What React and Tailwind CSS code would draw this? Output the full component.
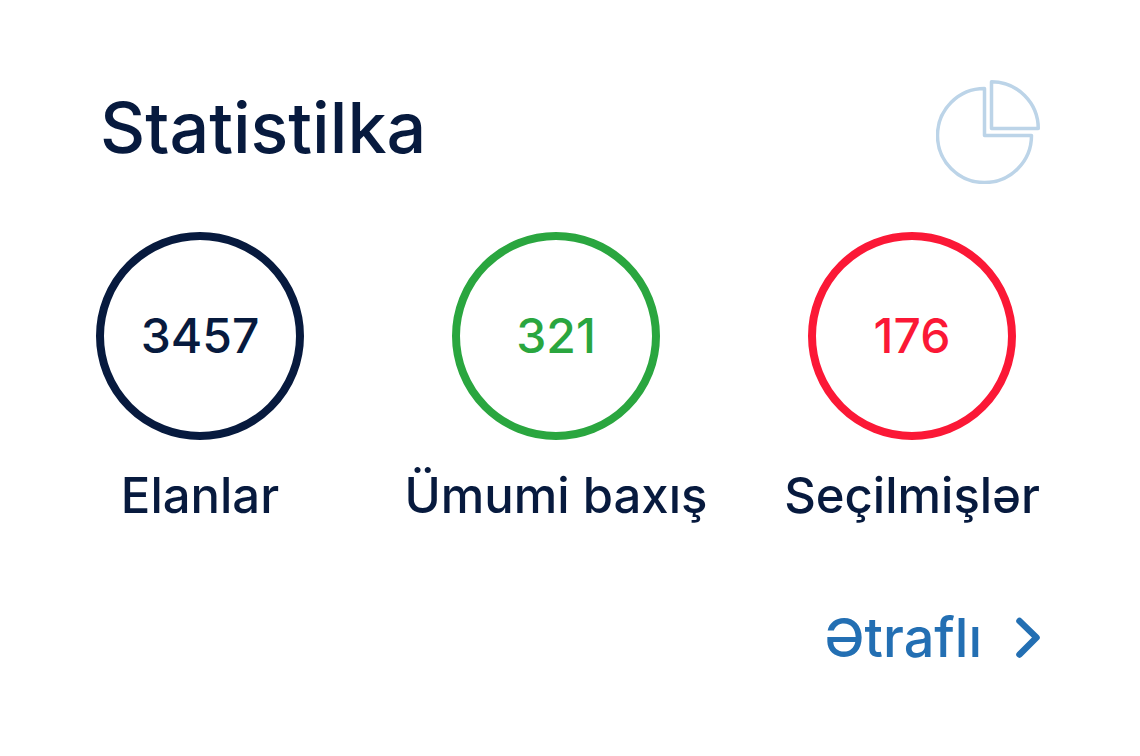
const stats = [
  { value: '3457', label: 'Elanlar', ring: 'border-[#071a3e] text-[#071a3e]' },
  { value: '321', label: 'Ümumi baxış', ring: 'border-[#2aa63f] text-[#2aa63f]' },
  { value: '176', label: 'Seçilmişlər', ring: 'border-[#fb1836] text-[#fb1836]' },
];

function PieIcon() {
  return (
    <svg width="104" height="104" viewBox="0 0 104 104" fill="none" stroke="#bcd4e8" strokeWidth="3.5" strokeLinejoin="round" aria-hidden="true">
      <path d="M48.500 8.500A47 47 0 1 0 95.500 55.500H48.500Z" />
      <path d="M55.500 1.750A46.750 46.750 0 0 1 102.250 48.500H55.500Z" />
    </svg>
  );
}

export default function App() {
  return (
    <main className="min-h-screen bg-white pt-20 pr-[100px] pb-16 pl-24 font-['Inter',sans-serif] font-medium text-[#071a3e]">
      <header className="flex items-start justify-between">
        <h1 className="pt-1 pl-1 text-[70px] leading-[88px]">Statistilka</h1>
        <PieIcon />
      </header>
      <ul className="mt-12 mr-6 flex justify-between">
        {stats.map((s) => (
          <li key={s.label} className="flex w-[208px] flex-col items-center">
            <strong className={`flex size-[208px] items-center justify-center rounded-full border-8 text-[48px] font-medium ${s.ring}`}>
              {s.value}
            </strong>
            <span className="mt-6 text-[49px] leading-16 whitespace-nowrap">{s.label}</span>
          </li>
        ))}
      </ul>
      <footer className="mt-[78px] flex justify-end">
        <a href="#details" className="flex items-center gap-8 text-[54px] leading-16 text-[#236fb3]">
          Ətraflı
          <svg width="26" height="42" viewBox="0 0 26 42" fill="none" stroke="currentColor" strokeWidth="6.5" strokeLinecap="round" strokeLinejoin="round" aria-hidden="true">
            <path d="M5.500 4L22.500 20.500L5.500 37.500" />
          </svg>
        </a>
      </footer>
    </main>
  );
}
